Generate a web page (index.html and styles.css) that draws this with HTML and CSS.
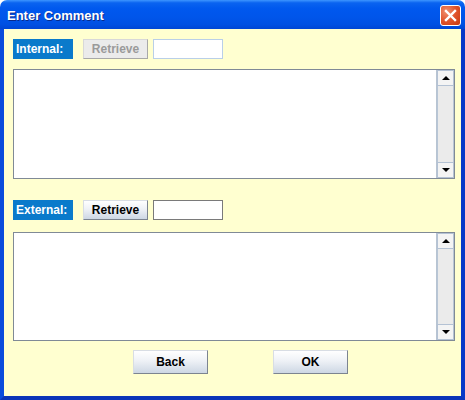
FILE: index.html
```html
<!DOCTYPE html>
<html lang="en">
<head>
    <meta charset="UTF-8">
    <title>Enter Comment</title>
    <link rel="stylesheet" href="styles.css">
</head>
<body>
    <div class="window">
        <div class="titlebar">
            <span class="title">Enter Comment</span>
            <span class="close-btn">
                <svg width="13" height="13" viewBox="0 0 13 13"><path d="M2 2 L11 11 M11 2 L2 11" stroke="#fff" stroke-width="2.4" stroke-linecap="square"/></svg>
            </span>
        </div>
        <div class="frame">
            <div class="row">
                <span class="tag">Internal:</span>
                <button class="btn small" disabled>Retrieve</button>
                <input class="field" type="text" disabled>
            </div>
            <div class="textbox">
                <div class="text-area"></div>
                <div class="scrollbar">
                    <div class="arrow up"></div>
                    <div class="track"></div>
                    <div class="arrow down"></div>
                </div>
            </div>

            <div class="row ext">
                <span class="tag">External:</span>
                <button class="btn small">Retrieve</button>
                <input class="field" type="text">
            </div>
            <div class="textbox second">
                <div class="text-area"></div>
                <div class="scrollbar">
                    <div class="arrow up"></div>
                    <div class="track"></div>
                    <div class="arrow down"></div>
                </div>
            </div>

            <div class="actions">
                <button class="btn wide">Back</button>
                <button class="btn wide">OK</button>
            </div>
        </div>
    </div>
</body>
</html>
```

FILE: styles.css
```css
body {
    margin: 0;
    font-family: "Liberation Sans", Arial, sans-serif;
    background: #fff;
}
.window {
    width: 465px;
    height: 400px;
    display: flex;
    flex-direction: column;
}
.titlebar {
    height: 29px;
    box-sizing: border-box;
    padding: 0 4px 0 7px;
    display: flex;
    align-items: center;
    justify-content: space-between;
    border-radius: 7px 7px 0 0;
    background: linear-gradient(to bottom, #3d95ff 0%, #0a63f0 10%, #0058ee 30%, #0055ea 60%, #0050e2 85%, #0046d4 100%);
}
.title {
    color: #fff;
    font-weight: bold;
    font-size: 13px;
    text-shadow: 1px 1px 0 #0a2a8a;
    padding-top: 1px;
}
.close-btn {
    width: 21px;
    height: 21px;
    box-sizing: border-box;
    border: 1px solid #fff;
    border-radius: 3px;
    background: radial-gradient(circle at 30% 30%, #f09070 0%, #e0542c 50%, #c8380e 100%);
    display: flex;
    align-items: center;
    justify-content: center;
    margin-top: 1px;
}
.frame {
    flex: 1;
    background: #ffffd0;
    border: 4px solid #0050e0;
    border-top: none;
    border-left-color: #0a4cdc;
    border-right-color: #0638c8;
    border-bottom-color: #0a34b8;
    padding: 10px 6px 0 9px;
    display: flex;
    flex-direction: column;
}
.row {
    display: flex;
    align-items: center;
    height: 20px;
}
.row.ext {
    margin-top: 21px;
}
.tag {
    width: 60px;
    height: 20px;
    box-sizing: border-box;
    padding: 3px 0 0 3px;
    background: #0a7acb;
    color: #fff;
    font-weight: bold;
    font-size: 12px;
    margin-right: 10px;
}
.btn {
    font-family: "Liberation Sans", Arial, sans-serif;
    font-weight: bold;
    font-size: 12px;
    color: #000;
    border: 1px solid #7c8490;
    border-top-color: #d8dde4;
    border-left-color: #d8dde4;
    background: linear-gradient(to bottom, #ffffff 0%, #eef1f6 45%, #cdd7e4 100%);
    padding: 0;
}
.btn.small {
    width: 65px;
    height: 20px;
    margin-right: 5px;
}
.btn[disabled] {
    color: #9a9a9a;
    background: #ebebeb;
    border-color: #d8d8d8 #a8a8a8 #a8a8a8 #d8d8d8;
}
.field {
    width: 70px;
    height: 20px;
    box-sizing: border-box;
    border: 1px solid #7a7a7a;
    background: #fff;
    margin: 0;
}
.field[disabled] {
    border-color: #b9cfe8;
}
.textbox {
    margin-top: 10px;
    width: 442px;
    height: 110px;
    box-sizing: border-box;
    border: 1px solid #808a96;
    background: #fff;
    display: flex;
}
.textbox.second {
    margin-top: 12px;
    height: 109px;
}
.text-area {
    flex: 1;
}
.scrollbar {
    width: 17px;
    display: flex;
    flex-direction: column;
    border-left: 1px solid #b8c4d2;
    background: #f0f0f0;
}
.arrow {
    height: 16px;
    box-sizing: border-box;
    border: 1px solid #b4c2d4;
    background: #f4f4f4;
    position: relative;
}
.arrow::after {
    content: "";
    position: absolute;
    left: 4px;
    width: 0;
    height: 0;
    border-left: 4px solid transparent;
    border-right: 4px solid transparent;
}
.arrow.up::after {
    top: 5px;
    border-bottom: 4px solid #000;
}
.arrow.down::after {
    top: 5px;
    border-top: 4px solid #000;
}
.track {
    flex: 1;
    background: #ebebeb;
    border: 1px solid #b8c6d6;
    border-top: none;
    border-bottom: none;
}
.actions {
    display: flex;
    justify-content: center;
    gap: 65px;
    margin-top: 9px;
    padding-left: 13px;
}
.btn.wide {
    width: 75px;
    height: 24px;
}
```
